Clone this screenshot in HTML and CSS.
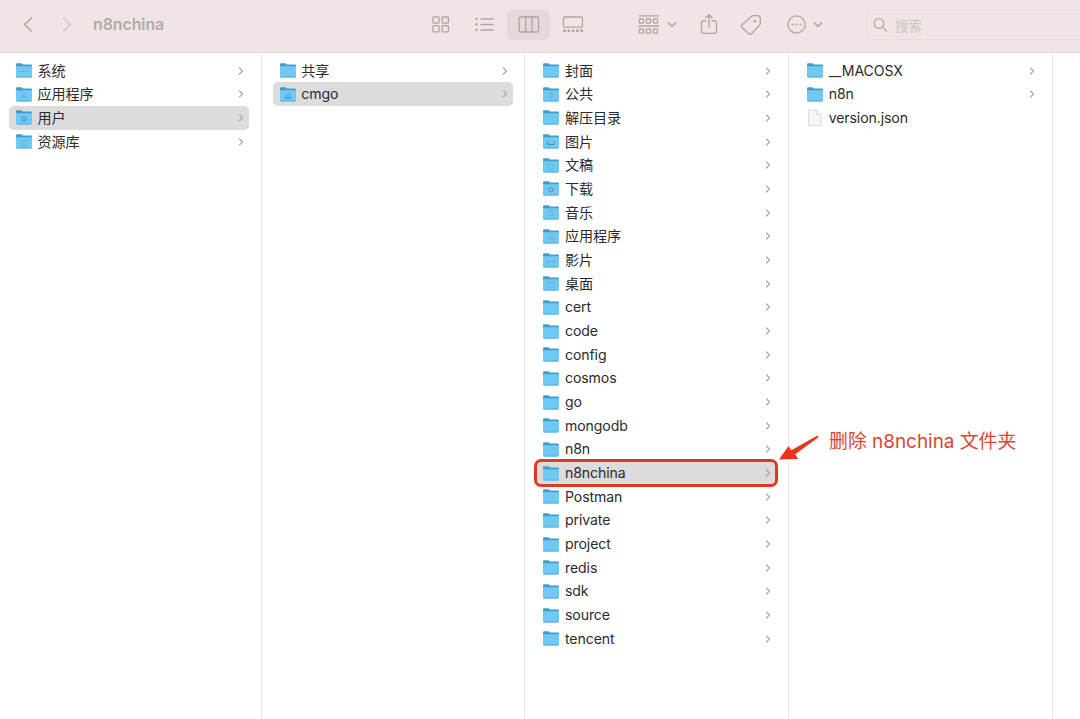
FILE: index.html
```html
<!DOCTYPE html>
<html lang="zh-CN">
<head>
    <meta charset="UTF-8">
    <meta name="viewport" content="width=device-width, initial-scale=1.0">
    <title>n8nchina</title>
    <link rel="stylesheet" href="styles.css">
</head>
<body>
    <div class="finder">
        <header class="toolbar">
            <div class="nav">
                <svg class="nav-icon" width="12" height="18" viewBox="0 0 12 18"><path d="M9.5 2 2.5 8.500l7 6.500"/></svg>
                <svg class="nav-icon disabled" width="12" height="18" viewBox="0 0 12 18"><path d="M2.500 2 9.500 8.500l-7 6.500"/></svg>
            </div>
            <h1 class="title">n8nchina</h1>

            <div class="views">
                <div class="view">
                    <svg width="18" height="18" viewBox="0 0 18 18"><rect x="1" y="1" width="6.2" height="6.2" rx="1"/><rect x="10.2" y="1" width="6.2" height="6.2" rx="1"/><rect x="1" y="9.700" width="6.2" height="6.2" rx="1"/><rect x="10.2" y="9.700" width="6.2" height="6.2" rx="1"/></svg>
                </div>
                <div class="view">
                    <svg width="20" height="18" viewBox="0 0 20 18"><path d="M6 3h12M6 8.500h12M6 14h12"/><g class="solid"><circle cx="1.5" cy="3" r="1.2"/><circle cx="1.5" cy="8.500" r="1.2"/><circle cx="1.5" cy="14" r="1.2"/></g></svg>
                </div>
                <div class="view active">
                    <svg width="22" height="18" viewBox="0 0 22 18"><rect x="1.2" y="1" width="19.4" height="15" rx="1.6"/><path d="M7.7 1v15M14.1 1v15"/></svg>
                </div>
                <div class="view">
                    <svg width="22" height="18" viewBox="0 0 22 18"><rect x="1.5" y="1" width="19" height="10.2" rx="1.6"/><path class="dots" d="M1.2 14.800h20"/></svg>
                </div>
            </div>

            <div class="tool group">
                <svg width="22" height="20" viewBox="0 0 22 20"><path d="M1 .9h19.5M1 11h19.5"/><rect x="1.4" y="4" width="4.2" height="4.2" rx=".8"/><rect x="8.4" y="4" width="4.2" height="4.2" rx=".8"/><rect x="15.4" y="4" width="4.2" height="4.2" rx=".8"/><rect x="1.4" y="14" width="4.2" height="4.2" rx=".8"/><rect x="8.4" y="14" width="4.2" height="4.2" rx=".8"/><rect x="15.4" y="14" width="4.2" height="4.2" rx=".8"/></svg>
                <svg class="caret" width="10" height="6" viewBox="0 0 10 6"><path d="M1.5 1.2 5 4.5l3.5-3.3"/></svg>
            </div>
            <div class="tool share">
                <svg width="18" height="22" viewBox="0 0 18 22"><path d="M6 7H3.2a1.7 1.7 0 0 0-1.7 1.7v9a1.7 1.7 0 0 0 1.7 1.7h11.600a1.7 1.7 0 0 0 1.7-1.7v-9A1.7 1.7 0 0 0 14.800 7H12M9 13V.8M5.8 3.800 9 .8l3.2 3"/></svg>
            </div>
            <div class="tool tag">
                <svg width="22" height="22" viewBox="0 0 22 22"><path d="M11.6 2.3q.7-.6 1.7-.6h3.6q3.5 0 3.5 3.5V9q0 1.3-.8 2.1l-8.1 8.7q-1.2 1.2-2.4.1l-7.2-6.6q-1.3-1.200 0-2.400z"/><circle class="solid" cx="15" cy="7.2" r="1.2"/></svg>
            </div>
            <div class="tool more">
                <svg width="20" height="20" viewBox="0 0 20 20"><circle cx="10.500" cy="9.500" r="8.600"/><g class="solid"><circle cx="6.500" cy="9.500" r="1.1"/><circle cx="10.500" cy="9.500" r="1.1"/><circle cx="14.500" cy="9.500" r="1.1"/></g></svg>
                <svg class="caret" width="10" height="6" viewBox="0 0 10 6"><path d="M1.5 1.2 5 4.5l3.5-3.3"/></svg>
            </div>

            <div class="search">
                <svg width="16" height="16" viewBox="0 0 16 16"><circle cx="6" cy="6.5" r="4.8"/><path d="m9.6 10.1 4 4"/></svg>
                <span>搜索</span>
            </div>
        </header>

        <main class="columns" id="columns"></main>

        <svg class="arrow" width="44" height="30" viewBox="0 0 44 30"><path d="M1 26.5 10.500 13l2.800 4.300L38.600 3.100q1.400-.6 1.600.3.200.7-.8 1.500L17.200 21.200l3 4.800z"/></svg>
        <div class="note">删除 n8nchina 文件夹</div>
    </div>

    <script>
        // 每一列的内容：[名称, 文件夹上的图案]
        const columns = [
            { selected: '用户', items: [['系统', 'system'], ['应用程序', 'apps'], ['用户', 'users'], ['资源库', 'library']] },
            { selected: 'cmgo', items: [['共享'], ['cmgo', 'home']] },
            {
                selected: 'n8nchina',
                marked: true,
                items: [
                    ['封面'], ['公共', 'shared'], ['解压目录'], ['图片', 'pictures'], ['文稿', 'docs'],
                    ['下载', 'users'], ['音乐', 'music'], ['应用程序', 'apps'], ['影片', 'movies'], ['桌面', 'desktop'],
                    ['cert'], ['code'], ['config'], ['cosmos'], ['go'], ['mongodb'], ['n8n'], ['n8nchina'],
                    ['Postman'], ['private'], ['project'], ['redis'], ['sdk'], ['source'], ['tencent']
                ]
            },
            { items: [['__MACOSX'], ['n8n'], ['version.json', 'file']] },
            { items: [] }
        ];

        const glyphs = {
            system: '<path d="M3 8.5h10"/>',
            apps: '<path d="m5.3 11.2 2.7-5 2.7 5M5 9.7h6"/>',
            users: '<circle class="strong" cx="8" cy="8.8" r="2.2"/>',
            library: '<path d="M5.5 6.5h5M6.5 7v4M9.5 7v4M5.5 11.3h5"/>',
            home: '<path class="strong" d="M5.8 8.5 8 6.5l2.3 2v3H5.8zM8 9.5V11"/>',
            shared: '<path d="m8 6 2.5 2.5L8 11 5.5 8.5zM8 6v5"/>',
            pictures: '<path class="strong" d="M4.8 7v3.5h6.4V7"/>',
            docs: '<path d="M6 5.8h2.6l1.6 1.6v4H6z"/>',
            music: '<path d="M6.8 10.6V6.5l3.3-.6v4.2M5.8 10.8h1M9 10.2h1"/>',
            movies: '<path d="M4.8 6v5.5M11.2 6v5.5M4.8 8.7h6.4"/>',
            desktop: '<path d="M4.8 6.5h6.4v4.6H4.8z"/>'
        };

        function folderIcon(glyph) {
            return `<svg class="icon" width="16" height="15" viewBox="0 0 16 15">
                <path class="folder-back" d="M0 1.5Q0 .3 1.2.3h4q.6 0 1 .5l.7.7h8q1.1 0 1.1 1.1V6H0z"/>
                <path class="folder-front" d="M0 3.2h16v10q0 1.3-1.3 1.3H1.3Q0 14.5 0 13.2z"/>
                <path class="folder-edge" d="M1 14h14"/>
                <g class="glyph">${glyphs[glyph] || ''}</g>
            </svg>`;
        }

        function fileIcon() {
            return `<svg class="icon file" width="16" height="18" viewBox="0 0 16 18">
                <path d="M2 1h7.5L14 5.5v11H2z"/><path d="M9.5 1v4.5H14"/>
            </svg>`;
        }

        function chevron() {
            return '<svg class="chevron" width="6" height="8" viewBox="0 0 6 8"><path d="m1.5 1 3 3-3 3"/></svg>';
        }

        document.getElementById('columns').innerHTML = columns.map(col => `
            <section class="column">
                ${col.items.map(([name, kind]) => {
                    const selected = name === col.selected;
                    return `<div class="row ${selected ? 'selected' : ''} ${selected && col.marked ? 'marked' : ''}">
                        ${kind === 'file' ? fileIcon() : folderIcon(kind)}
                        <span class="name">${name}</span>
                        ${kind === 'file' ? '' : chevron()}
                    </div>`;
                }).join('')}
            </section>
        `).join('');
    </script>
</body>
</html>
```
FILE: styles.css
```css
* {
    box-sizing: border-box;
}

body {
    margin: 0;
    font-family: Inter, "Noto Sans CJK SC", sans-serif;
    background-color: #fff;
    overflow: hidden;
}

.finder {
    position: relative;
    display: flex;
    flex-direction: column;
    width: 1080px;
    height: 719px;
    overflow: hidden;
}

svg {
    display: block;
    flex: none;
    fill: none;
    stroke-linecap: round;
    stroke-linejoin: round;
}

.toolbar {
    display: flex;
    align-items: center;
    height: 53px;
    flex: none;
    padding: 0 0 3px 22px;
    background-color: #efe5e4;
    border-bottom: 1px solid #e4dcdb;
    stroke: #b0a5a4;
    stroke-width: 1.3;
}

.nav {
    display: flex;
    gap: 27px;
    width: 71px;
}

.nav-icon {
    stroke-width: 1.7;
}

.nav-icon.disabled {
    stroke: #d3c9c8;
}

.title {
    width: 326px;
    margin: 0;
    font-size: 15.8px;
    font-weight: 600;
    line-height: 20px;
    color: #b3a9a8;
}

.views {
    display: flex;
    gap: 1px;
}

.view {
    display: flex;
    align-items: center;
    justify-content: center;
    width: 43px;
    height: 30px;
    border-radius: 6px;
}

.view.active {
    background-color: #e3d9d8;
}

.dots {
    stroke-width: 2.4;
    stroke-linecap: butt;
    stroke-dasharray: 2.6 1.7;
}

.solid {
    fill: #b0a5a4;
    stroke: none;
}

.tool {
    display: flex;
    align-items: center;
    gap: 7px;
}

.caret {
    stroke-width: 1.6;
}

.group {
    margin-left: 44px;
}

.share {
    margin-left: 23px;
}

.tag {
    margin-left: 22px;
}

.more {
    margin-left: 24px;
}

.search {
    display: flex;
    align-items: center;
    gap: 6px;
    flex: 1;
    height: 30px;
    margin-left: 43px;
    padding-left: 6px;
    border: 1px solid #e7dddc;
    border-right: none;
    border-radius: 6px 0 0 6px;
    font-size: 13.5px;
    color: #cdc3c2;
}

.columns {
    display: flex;
    flex: 1;
    margin-left: -2px;
}

.column {
    width: 263.7px;
    flex: none;
    padding: 5.8px 11.7px 0 11px;
    border-right: 1px solid #e8e8e8;
}

.row {
    display: flex;
    align-items: center;
    height: 23.68px;
    padding: 0 5px 0 7px;
    border-radius: 5px;
    font-size: 14.1px;
    color: #2b2b2b;
}

.row.selected {
    background-color: #dcdcdc;
}

.row.marked {
    outline: 3px solid #dd3a25;
    outline-offset: -1px;
}

.name {
    flex: 1;
    margin-left: 5.6px;
    line-height: 20px;
    letter-spacing: -0.1px;
    white-space: nowrap;
}

.folder-back {
    fill: #439cc2;
}

.folder-front {
    fill: #70c9f5;
}

.folder-edge {
    stroke: #58acd5;
}

.glyph {
    stroke: #5ab2dc;
    stroke-width: .8;
}

.strong {
    stroke: #3e98c4;
    stroke-width: 1;
}

.file {
    fill: #f6f6f6;
    stroke: #d0d0d0;
    stroke-width: .8;
}

.chevron {
    stroke: #a6a6a6;
    stroke-width: 1.2;
}

.arrow {
    position: absolute;
    left: 778px;
    top: 433px;
    fill: #e8341c;
}

.note {
    position: absolute;
    left: 829px;
    top: 428px;
    font-size: 18.9px;
    line-height: 28px;
    white-space: nowrap;
    color: #dc4530;
}
```
